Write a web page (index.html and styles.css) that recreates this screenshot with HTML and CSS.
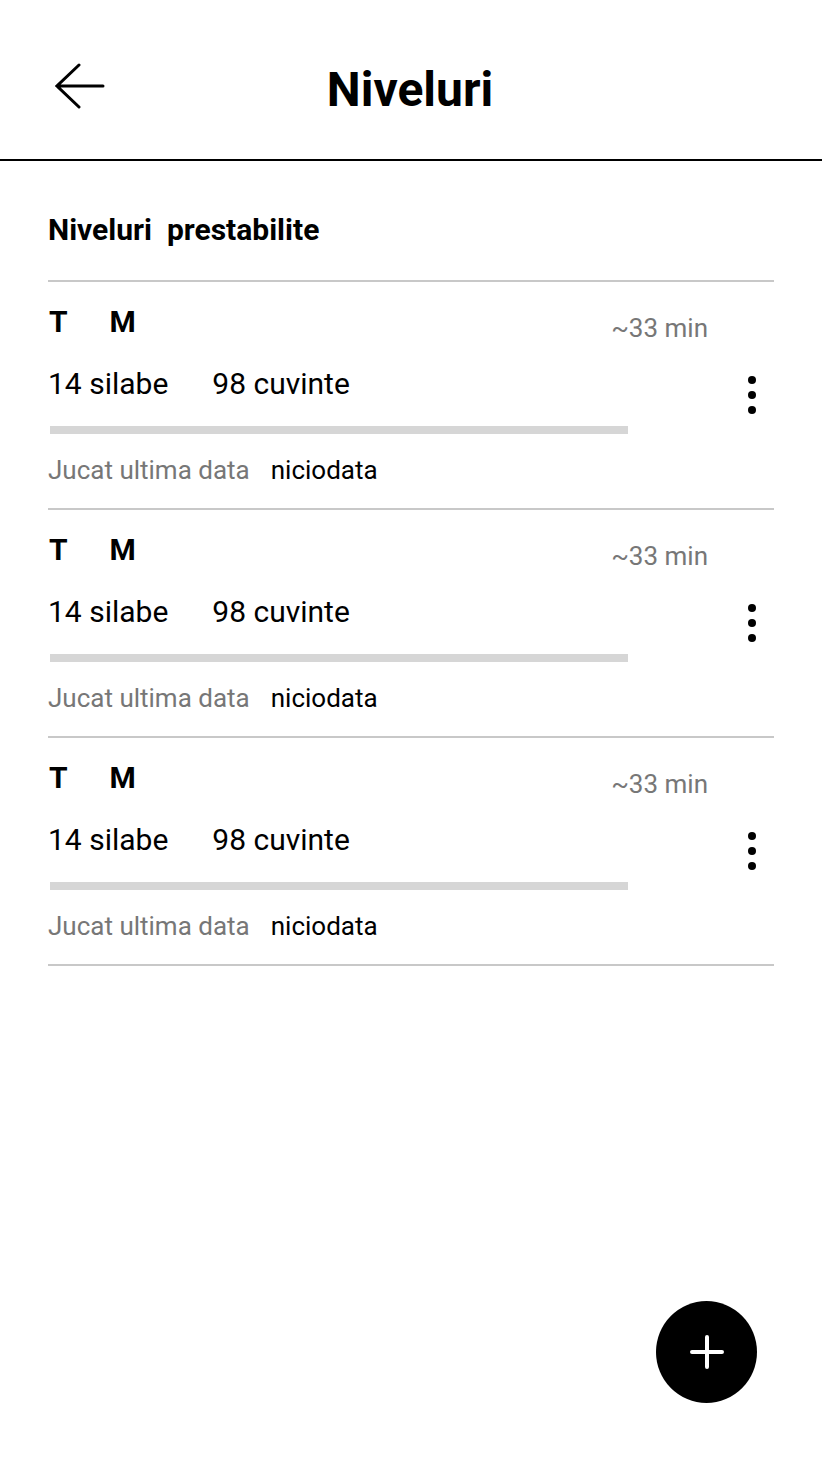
FILE: index.html
```html
<!DOCTYPE html>
<html lang="ro">
<head>
<meta charset="utf-8">
<title>Niveluri</title>
<link rel="stylesheet" href="styles.css">
</head>
<body>
<header class="topbar">
  <button class="back" aria-label="Înapoi">
    <svg width="50" height="46" viewBox="0 0 50 46"><path d="M2 23 H48 M24 2 L2 23 L24 44" fill="none" stroke="#000" stroke-width="3" stroke-linecap="round" stroke-linejoin="miter"/></svg>
  </button>
  <h1 class="title">Niveluri</h1>
  <span class="spacer"></span>
</header>
<main class="content">
  <h2 class="section-title">Niveluri&nbsp; prestabilite</h2>
  <ul class="levels">
    <li class="level">
      <div class="level-main">
        <div class="line1">
          <div class="tags"><span>T</span><span>M</span></div>
          <span class="duration">~33 min</span>
        </div>
        <div class="line2"><span>14 silabe</span><span>98 cuvinte</span></div>
        <div class="progress"></div>
        <div class="line3"><span class="muted">Jucat ultima data</span><span>niciodata</span></div>
      </div>
      <div class="kebab"><i></i><i></i><i></i></div>
    </li>
    <li class="level">
      <div class="level-main">
        <div class="line1">
          <div class="tags"><span>T</span><span>M</span></div>
          <span class="duration">~33 min</span>
        </div>
        <div class="line2"><span>14 silabe</span><span>98 cuvinte</span></div>
        <div class="progress"></div>
        <div class="line3"><span class="muted">Jucat ultima data</span><span>niciodata</span></div>
      </div>
      <div class="kebab"><i></i><i></i><i></i></div>
    </li>
    <li class="level">
      <div class="level-main">
        <div class="line1">
          <div class="tags"><span>T</span><span>M</span></div>
          <span class="duration">~33 min</span>
        </div>
        <div class="line2"><span>14 silabe</span><span>98 cuvinte</span></div>
        <div class="progress"></div>
        <div class="line3"><span class="muted">Jucat ultima data</span><span>niciodata</span></div>
      </div>
      <div class="kebab"><i></i><i></i><i></i></div>
    </li>
  </ul>
</main>
<button class="fab" aria-label="Adaugă">
  <svg width="34" height="34" viewBox="0 0 34 34"><path d="M17 2 V32 M2 17 H32" stroke="#fff" stroke-width="4" stroke-linecap="round"/></svg>
</button>
</body>
</html>
```
FILE: styles.css
```css
* { box-sizing: border-box; }
html, body { margin: 0; padding: 0; background: #fff; }
body {
  font-family: Roboto, "Noto Sans", "Liberation Sans", sans-serif;
  color: #000;
  width: 822px;
  min-height: 1462px;
  position: relative;
}
.topbar {
  height: 161px;
  border-bottom: 2px solid #000;
  display: grid;
  grid-template-columns: 1fr auto 1fr;
  align-items: start;
  padding: 64px 57px 0 55px;
}
.back {
  border: 0; background: none; padding: 0; margin: -1px 0 0 0;
  width: 50px; height: 46px; display: block; justify-self: start;
}
.back svg { display: block; }
.title {
  margin: 2px 0 0 0;
  font-size: 48px;
  line-height: 48px;
  font-weight: 700;
}
.content { padding: 0 48px; }
.section-title {
  margin: 54px 0 0 0;
  font-size: 30px;
  line-height: 30px;
  font-weight: 700;
  padding-bottom: 35px;
  border-bottom: 2px solid #c8c8c8;
}
.levels { list-style: none; margin: 0; padding: 0; }
.level {
  display: flex;
  align-items: center;
  border-bottom: 2px solid #c8c8c8;
  height: 228px;
}
.level-main {
  flex: 1;
  padding: 25px 22px 25px 0;
}
.line1 {
  display: flex;
  justify-content: space-between;
  align-items: flex-start;
  height: 30px;
}
.tags {
  display: flex;
  gap: 42px;
  padding-left: 1px;
  font-size: 30px;
  line-height: 30px;
  font-weight: 700;
}
.duration {
  margin-top: 8px;
  font-size: 26px;
  line-height: 26px;
  color: #777;
}
.line2 {
  margin-top: 32px;
  display: flex;
  gap: 44px;
  font-size: 30px;
  line-height: 30px;
}
.progress {
  margin: 27px 80px 0 2px;
  height: 8px;
  background: #d6d6d6;
}
.line3 {
  margin-top: 23px;
  display: flex;
  gap: 21px;
  font-size: 26px;
  line-height: 26px;
}
.muted { color: #777; }
.kebab {
  width: 44px;
  display: flex;
  flex-direction: column;
  align-items: center;
  gap: 7px;
}
.kebab i {
  display: block;
  width: 8px;
  height: 8px;
  border-radius: 50%;
  background: #000;
}
.fab {
  position: absolute;
  left: 656px;
  top: 1301px;
  width: 101px;
  height: 102px;
  border-radius: 50%;
  background: #000;
  border: 0;
  padding: 0;
  display: flex;
  align-items: center;
  justify-content: center;
}
.fab svg { display: block; }
```
